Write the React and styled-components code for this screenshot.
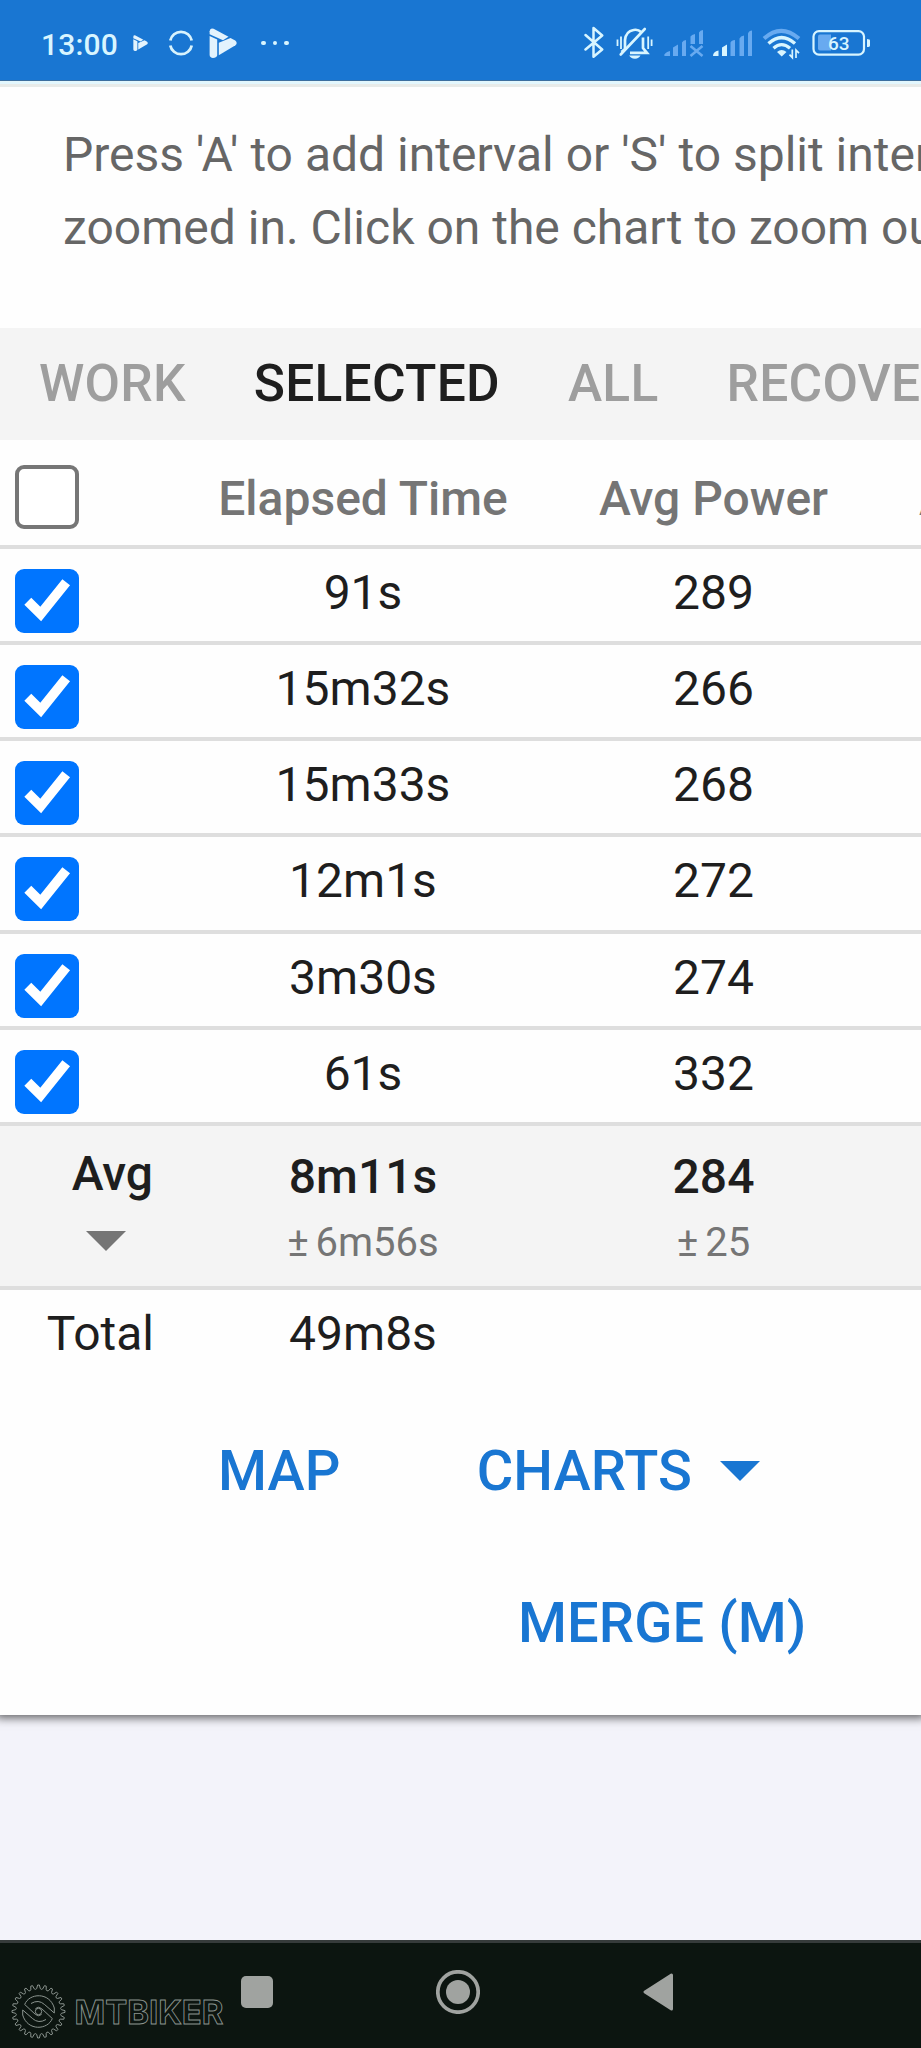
import React, { useState } from 'react';
import styled, { createGlobalStyle } from 'styled-components';

const GlobalStyle = createGlobalStyle`
    * { box-sizing: border-box; }
    body {
        margin: 0;
        background: #f3f3fa;
        font-family: Roboto, sans-serif;
        overflow: hidden;
    }
`;

const intervals = [
    { id: 1, time: "91s", power: 289 },
    { id: 2, time: "15m32s", power: 266 },
    { id: 3, time: "15m33s", power: 268 },
    { id: 4, time: "12m1s", power: 272 },
    { id: 5, time: "3m30s", power: 274 },
    { id: 6, time: "61s", power: 332 }
];

const tabs = ["Work", "Selected", "All", "Recovery"];

const PlayMark = ({ size }) => (
    <svg width={size} height={size * 1.07} viewBox="0 0 28 30" fill="#e3f3fd">
        <path d="M.6 3.2Q1 -.6 4.600 .8L19.500 8.800 14 12.200 .6 6.200Z" />
        <path d="M.6 8L8.200 11.600V27.500Q7.400 30 4 30 .8 29.600 .6 27Z" />
        <path d="M9.800 14.800L21.500 9.900 26.300 12.600Q29 15 26.500 17.400L9.800 27.200Z" />
    </svg>
);

const SyncIcon = () => (
    <svg width="26" height="26" viewBox="0 0 26 26" fill="none" stroke="#d8f3fd" strokeWidth="2.8">
        <path d="M2.300 10.600A10.900 10.900 0 0 1 23.700 10.600" />
        <path d="M2.300 15.400A10.900 10.900 0 0 0 23.700 15.400" />
    </svg>
);

const StatusIcons = () => (
    <svg width="300" height="40" viewBox="0 0 300 40" fill="none" stroke="#d8f5ff">
        {/* bluetooth */}
        <path d="M1.5 12L18.200 26.500 9.500 33.800V5L18.200 12.500 1.500 26.500" strokeWidth="2.5" strokeLinejoin="round" strokeLinecap="round" />

        {/* muted bell */}
        <path d="M37.500 29L41 26V17Q41.800 8.500 49.500 7 54 6 57 9 M46 29.800H63L59 25V14.500" strokeWidth="2.700" />
        <path d="M36.700 31.500L60.800 6" strokeWidth="2.600" strokeLinecap="round" />
        <path d="M45.200 32.500H56.500Q55 35.600 51 35.700 46.500 35.600 45.200 32.500Z" fill="#d8f5ff" stroke="none" />
        <path d="M33.500 16.500V23 M37 13.500V26 M64.200 13.500V26 M67.600 16.500V23" strokeWidth="1.800" />

        <g transform="translate(0 1.600)">
            {/* sim 1, no service */}
            <g stroke="none" fill="#68aaf0">
                <path d="M80 30.7Q81 28 86 26.5V31.5H81Z M89 31.5V23L94 20V31.5Z M98 31.5V18Q99 15.5 102 15.5V31.5Z M106.5 19.5V12Q107.5 10 111 9.5V19.5Z M115 19.5V8Q116 5.8 119 5.5V19.5Z" />
            </g>
            <path d="M106.5 21.5L118.5 31.5M118.5 21.5L106.5 31.5" stroke="#68aaf0" strokeWidth="2.6" />

            {/* sim 2 */}
            <g stroke="none">
                <path d="M129 31.5Q129 27 134.5 26V31.5Z M138 31.5V23L143 20V31.5Z" fill="#d8f5ff" />
                <path d="M146.5 31.5V18Q147.5 15.5 151 15.5V31.5Z M155.5 31.5V14Q156.5 11.5 160 11V31.5Z M164 31.5V9Q165 6 168 6V31.5Z" fill="#68aaf0" />
            </g>

            {/* wifi */}
            <path d="M180 14Q197 -1.5 215 14" stroke="#68aaf0" strokeWidth="4" />
            <path d="M184.5 19Q197.5 7 211 19" strokeWidth="3.4" />
            <path d="M189.5 23.7Q197.5 16.5 206 23.7" strokeWidth="3.2" />
            <path d="M193 27.5Q197.5 23.5 202.5 27.5L197.7 32Z" fill="#d8f5ff" stroke="none" />
            <path d="M208.3 25V33L205.5 30 M212 33.5V25.5L215 28.5" strokeWidth="1.7" />

            {/* battery */}
            <rect x="229.5" y="6.500" width="50.5" height="23.500" rx="5.5" strokeWidth="2.2" />
            <path d="M236 10H247V26H236Q234 26 234 24V12Q234 10 236 10Z" fill="#68aaf0" stroke="none" />
            <path d="M283 14.5Q286 14.5 286 16V21Q286 22.5 283 22.5Z" fill="#d8f5ff" stroke="none" />
            <text x="254.8" y="25.900" fontFamily="Roboto" fontSize="19" fontWeight="500" textAnchor="middle" fill="#d8f5ff" stroke="none">63</text>
        </g>
    </svg>
);

const teeth = Array.from({ length: 24 }, (_, i) => {
    const at = (r, off) => {
        const a = ((i + off) * Math.PI) / 12;
        return `${(27.5 + r * Math.cos(a)).toFixed(2)} ${(28.5 + r * Math.sin(a)).toFixed(2)}`;
    };
    return `${i ? "L" : "M"}${at(26.5, -0.13)}L${at(26.5, 0.13)}L${at(23, 0.3)}Q${at(21.7, 0.5)} ${at(23, 0.7)}`;
}).join("") + "Z";

const swirl = "M13.700 21.500C18 10 38.500 8.500 43.300 25V30L33.500 21.500Q27.500 16 20 20.500M13.700 21.500L24.500 31.500Q27.500 34 30.500 31.500";

const WatermarkLogo = () => (
    <svg width="220" height="60" viewBox="0 0 220 60" fill="none" stroke="#8b948f" strokeWidth="1">
        <path d={teeth} />
        <path d={swirl} />
        <path d={swirl} transform="rotate(180 27.500 28.500)" />
        <circle cx="27.500" cy="28.500" r="3.200" />
        <text x="63.500" y="41" fontFamily="Inter" fontSize="33" fontWeight="700" textLength="149" lengthAdjust="spacingAndGlyphs" strokeWidth="0.9">MTBIKER</text>
    </svg>
);

const App = () =>
{
    const [activeTab, setActiveTab] = useState("Selected");
    const [selected, setSelected] = useState(intervals.map(i => i.id));

    const toggle = id =>
    {
        setSelected(selected.includes(id)
            ? selected.filter(s => s !== id)
            : [...selected, id]);
    };

    return (<Screen>
        <GlobalStyle />
        <StatusBar>
            <Clock>13:00</Clock>
            <Notices>
                <PlayMark size={15} />
                <SyncIcon />
                <PlayMark size={28} />
                <Dots><i /><i /><i /></Dots>
            </Notices>
            <StatusIcons />
        </StatusBar>

        <Card>
            <TopRule />
            <Hint>
                Press 'A' to add interval or 'S' to split interval when<br />
                zoomed in. Click on the chart to zoom out.
            </Hint>
            <TabBar>
                {tabs.map(tab => (
                    <Tab key={tab} $active={tab === activeTab} onClick={() => setActiveTab(tab)}>{tab}</Tab>
                ))}
            </TabBar>

            <HeaderRow>
                <CheckCell><CheckBox /></CheckCell>
                <HeadCell>Elapsed Time</HeadCell>
                <HeadCell>Avg Power</HeadCell>
                <NextHead>Avg HR</NextHead>
            </HeaderRow>
            {intervals.map(({ id, time, power }) => (
                <Row key={id}>
                    <CheckCell>
                        <CheckBox $checked={selected.includes(id)} onClick={() => toggle(id)}>
                            {selected.includes(id) && (
                                <svg width="64" height="64" viewBox="0 0 64 64" fill="none" stroke="#fff" strokeWidth="9.8">
                                    <path d="M12.800 32.200L25.700 45 51.200 13.200" />
                                </svg>
                            )}
                        </CheckBox>
                    </CheckCell>
                    <Cell>{time}</Cell>
                    <Cell>{power}</Cell>
                </Row>
            ))}
            <AvgRow>
                <AvgLabel>
                    Avg
                    <Caret $color="#757575" />
                </AvgLabel>
                <AvgCell>8m11s<small>± 6m56s</small></AvgCell>
                <AvgCell>284<small>± 25</small></AvgCell>
            </AvgRow>
            <TotalRow>
                <TotalLabel>Total</TotalLabel>
                <Cell>49m8s</Cell>
            </TotalRow>

            <Actions $left={218} $gap={136}>
                <Button>Map</Button>
                <Button>Charts <Caret $color="#1976d2" /></Button>
            </Actions>
            <Actions $left={518}>
                <Button>Merge (M)</Button>
            </Actions>
        </Card>

        <NavBar>
            <svg width="32" height="32"><rect width="32" height="32" rx="5" fill="#a0a3a0" /></svg>
            <svg width="44" height="44" viewBox="0 0 44 44" fill="#a0a3a0">
                <circle cx="22" cy="22" r="20.200" fill="none" stroke="#a0a3a0" strokeWidth="3.700" />
                <circle cx="22" cy="22" r="12" />
            </svg>
            <svg width="31" height="38" viewBox="0 0 31 38">
                <path d="M2 19L28.500 2V36Z" fill="#a0a3a0" stroke="#a0a3a0" strokeWidth="3" strokeLinejoin="round" />
            </svg>
            <Watermark><WatermarkLogo /></Watermark>
        </NavBar>
    </Screen>);
};

export default App;

const Screen = styled.div`
    width: 921px;
    height: 2048px;
    display: flex;
    flex-direction: column;
    overflow: hidden;
    background: #f3f3fa;
`;

const StatusBar = styled.header`
    position: relative;
    height: 81px;
    flex: none;
    display: flex;
    align-items: center;
    padding: 6px 37px 0 41px;
    background: #1976d2;
    border-bottom: 1px solid #3d6f9f;
`;

const Clock = styled.span`
    width: 92px;
    font-size: 30px;
    font-weight: 500;
    letter-spacing: 0.2px;
    color: #d8f5ff;
    padding-top: 3px;
`;

const Notices = styled.div`
    display: flex;
    align-items: center;
    gap: 15px;
    flex: 1;

    svg:nth-child(2) {
        margin-left: 5px;
    }
`;

const Dots = styled.span`
    display: flex;
    gap: 7px;
    margin-left: 9px;

    i {
        width: 4.500px;
        height: 4.500px;
        border-radius: 50%;
        background: #d8f5ff;
    }
`;

const Card = styled.main`
    height: 1634px;
    flex: none;
    background: #fefefe;
    box-shadow: 0 -1px 9px 4px rgba(0, 0, 0, 0.6);
    overflow: hidden;
`;

const TopRule = styled.div`
    height: 6px;
    background: #e8ebe9;
    border-top: 3px solid #e3f7fd;
`;

const Hint = styled.p`
    margin: 0;
    height: 241px;
    padding: 31px 0 0 63px;
    font-size: 48px;
    line-height: 73px;
    white-space: nowrap;
    color: #666;
`;

const TabBar = styled.nav`
    display: flex;
    align-items: center;
    gap: 68px;
    height: 112px;
    padding: 0 0 2px 39px;
    background: #f4f4f4;
`;

const Tab = styled.button`
    border: 0;
    padding: 0;
    background: none;
    font: 500 51.500px Roboto, sans-serif;
    letter-spacing: 0.250px;
    text-transform: uppercase;
    color: ${props => props.$active ? "#1e1e1e" : "#9e9e9e"};
`;

const Row = styled.div`
    display: grid;
    grid-template-columns: 175px 376px 325px 1fr;
    height: 96.150px;
    border-bottom: 4px solid #dedede;
`;

const HeaderRow = styled(Row)`
    height: 109px;
`;

const AvgRow = styled(Row)`
    height: 164px;
    background: #f4f4f4;
`;

const TotalRow = styled(Row)`
    height: 92px;
    border: 0;
`;

const CheckCell = styled.div`
    padding: 20px 0 0 15px;

    ${HeaderRow} & {
        padding-top: 25px;
    }
`;

const CheckBox = styled.div`
    width: 64px;
    height: 64px;
    border-radius: 9px;
    border: ${props => props.$checked ? "0" : "4px solid #767676"};
    background: ${props => props.$checked ? "#0075ff" : "#fff"};
`;

const Cell = styled.div`
    font-size: 48px;
    line-height: 56px;
    text-align: center;
    padding-top: 16px;
    color: #1e1e1e;
`;

const HeadCell = styled(Cell)`
    font-weight: 500;
    padding-top: 31px;
    color: #757575;
`;

const NextHead = styled(HeadCell)`
    text-align: left;
    padding-left: 43px;
    white-space: nowrap;
    overflow: hidden;
`;

const AvgCell = styled(Cell)`
    font-weight: 500;
    padding-top: 23px;

    small {
        display: block;
        margin-top: 10px;
        font-size: 40px;
        font-weight: 400;
        word-spacing: -3px;
        color: #757575;
    }
`;

const AvgLabel = styled(Cell)`
    display: flex;
    flex-direction: column;
    align-items: flex-end;
    gap: 29px;
    padding: 20px 22px 0 0;
    font-weight: 500;
`;

const TotalLabel = styled(Cell)`
    text-align: right;
    padding-right: 21px;
`;

const Caret = styled.span`
    width: 0;
    height: 0;
    border: 20px solid transparent;
    border-top-color: ${props => props.$color};
    border-bottom: 0;

    ${AvgLabel} & {
        margin-right: 27px;
    }
`;

const Actions = styled.div`
    display: flex;
    align-items: center;
    gap: ${props => props.$gap || 0}px;
    height: 152.500px;
    padding: 25px 0 0 ${props => props.$left}px;
`;

const Button = styled.button`
    display: flex;
    align-items: center;
    gap: 28px;
    border: 0;
    padding: 0;
    background: none;
    font: 500 56px Roboto, sans-serif;
    letter-spacing: 0.100px;
    text-transform: uppercase;
    color: #1976d2;
`;

const NavBar = styled.footer`
    position: relative;
    display: flex;
    align-items: center;
    height: 108px;
    flex: none;
    margin-top: auto;
    padding: 0 0 7px 241px;
    gap: 163px;
    border-top: 3px solid #363b3b;
    background: #0c1510;
`;

const Watermark = styled.div`
    position: absolute;
    left: 11px;
    top: 40px;
`;
